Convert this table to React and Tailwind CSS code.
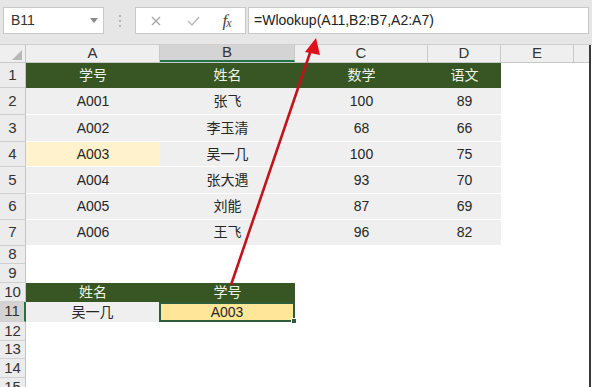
import React from "react";

const cols = [
  { k: "A", w: "w-[134px]" },
  { k: "B", w: "w-[135px]" },
  { k: "C", w: "w-[133px]" },
  { k: "D", w: "w-[73px]" },
  { k: "E", w: "w-[73px]" },
];

const data = [
  ["A001", "张飞", "100", "89"],
  ["A002", "李玉清", "68", "66"],
  ["A003", "吴一几", "100", "75"],
  ["A004", "张大遇", "93", "70"],
  ["A005", "刘能", "87", "69"],
  ["A006", "王飞", "96", "82"],
];
const rowH = ["h-[27px]", "h-[27px]", "h-[25px]", "h-[27px]", "h-[26px]", "h-[26px]"];

function RowHead({ n, active }) {
  return (
    <div
      className={
        "w-[26px] shrink-0 flex items-center justify-center text-[15px] text-[#333] border-b border-[#d0d0d0] " +
        (active ? "bg-[#d3d3d3] border-r-2 border-r-[#217346]" : "bg-[#ececec] border-r border-r-[#c4c4c4]")
      }
    >
      {n}
    </div>
  );
}

export default function App() {
  return (
    <div className="relative w-[592px] h-[387px] overflow-hidden bg-white font-['Liberation_Sans','Noto_Sans_CJK_SC',sans-serif]">
      {/* toolbar */}
      <div className="h-[45px] bg-[#e6e6e6] border-b border-[#cfcfcf] flex items-start pt-[7px] pl-[3px]">
        <div className="w-[101px] h-[27px] bg-white border border-[#c8c8c8] flex items-center justify-between pl-[7px] pr-[5px] text-[14px] text-[#333]">
          <span>B11</span>
          <svg width="8" height="5" viewBox="0 0 8 5"><path d="M0 0 L8 0 L4 5 Z" fill="#8a8a8a" /></svg>
        </div>
        <div className="w-[31px] h-[27px] flex flex-col items-center justify-center gap-[3px]">
          <div className="w-[2px] h-[2px] bg-[#b5b5b5]" />
          <div className="w-[2px] h-[2px] bg-[#b5b5b5]" />
          <div className="w-[2px] h-[2px] bg-[#b5b5b5]" />
        </div>
        <div className="w-[111px] h-[27px] bg-white border border-[#c8c8c8] flex items-center">
          <div className="w-[40px] flex justify-center">
            <svg width="10" height="10" viewBox="0 0 10 10"><path d="M1 1 L9 9 M9 1 L1 9" stroke="#a8a8a8" strokeWidth="1.4" /></svg>
          </div>
          <div className="w-[34px] flex justify-center">
            <svg width="13" height="10" viewBox="0 0 13 10"><path d="M1 5 L5 9 L12 1" stroke="#b8b8b8" strokeWidth="1.4" fill="none" /></svg>
          </div>
          <div className="w-[34px] flex justify-center items-center font-['Liberation_Serif',serif] italic text-[17px] text-[#444]">
            f<span className="text-[12px] -ml-[1px] mt-[5px]">x</span>
          </div>
        </div>
        <div className="ml-[2px] w-[341px] h-[27px] bg-white border border-[#c8c8c8] flex items-center pl-[5px] text-[14px] text-[#222]">
          =Wlookup(A11,B2:B7,A2:A7)
        </div>
      </div>

      {/* sheet */}
      <div className="w-[591px] border-r-2 border-[#3a3a3a]">
        {/* column header */}
        <div className="flex h-[18px] bg-[#efefef] border-b border-[#c8c8c8]">
          <div className="w-[26px] shrink-0 relative border-r border-[#c4c4c4]">
            <svg className="absolute right-[3px] bottom-[2px]" width="10" height="10" viewBox="0 0 10 10"><path d="M10 0 L10 10 L0 10 Z" fill="#b8b8b8" /></svg>
          </div>
          {cols.map((c) => (
            <div
              key={c.k}
              className={
                c.w +
                " shrink-0 flex items-center justify-center text-[15px] text-[#333] border-r border-[#c8c8c8] " +
                (c.k === "B" ? "bg-[#d4d4d4] border-b-2 border-b-[#217346]" : "")
              }
            >
              {c.k}
            </div>
          ))}
          <div className="flex-1" />
        </div>

        {/* row 1 */}
        <div className="flex h-[25px]">
          <RowHead n="1" />
          <div className="flex w-[475px] bg-[#375623] text-[14px] text-[#eef4e8]">
            <div className="w-[134px] flex items-center justify-center">学号</div>
            <div className="w-[135px] flex items-center justify-center">姓名</div>
            <div className="w-[133px] flex items-center justify-center">数学</div>
            <div className="w-[73px] flex items-center justify-center">语文</div>
          </div>
        </div>

        {data.map((r, i) => (
          <div key={i} className={"flex " + rowH[i]}>
            <RowHead n={String(i + 2)} />
            <div className="flex w-[475px] text-[14px] text-[#262626] border-b border-white">
              <div className={"w-[134px] flex items-center justify-center " + (i === 2 ? "bg-[#fff2cc]" : "bg-[#efefef]")}>{r[0]}</div>
              <div className="w-[135px] flex items-center justify-center bg-[#efefef]">{r[1]}</div>
              <div className="w-[133px] flex items-center justify-center bg-[#efefef]">{r[2]}</div>
              <div className="w-[73px] flex items-center justify-center bg-[#efefef]">{r[3]}</div>
            </div>
          </div>
        ))}

        <div className="flex h-[18px]"><RowHead n="8" /></div>
        <div className="flex h-[19px]"><RowHead n="9" /></div>

        {/* row 10 */}
        <div className="flex h-[19px]">
          <RowHead n="10" />
          <div className="flex w-[269px] bg-[#375623] text-[14px] text-[#eef4e8]">
            <div className="w-[134px] flex items-center justify-center">姓名</div>
            <div className="w-[135px] flex items-center justify-center">学号</div>
          </div>
        </div>

        {/* row 11 */}
        <div className="flex h-[20px]">
          <RowHead n="11" active />
          <div className="w-[133px] flex items-center justify-center bg-[#efefef] text-[14px] text-[#262626]">吴一几</div>
          <div className="relative w-[136px] flex items-center justify-center bg-[#ffe699] border-2 border-[#2f5d3c] text-[14px] text-[#262626]">
            A003
            <div className="absolute -right-[4px] -bottom-[4px] w-[6px] h-[6px] bg-[#2f5d3c] border border-white" />
          </div>
        </div>

        <div className="flex h-[19px]"><RowHead n="12" /></div>
        <div className="flex h-[18px]"><RowHead n="13" /></div>
        <div className="flex h-[19px]"><RowHead n="14" /></div>
        <div className="flex h-[19px]"><RowHead n="15" /></div>
      </div>

      {/* arrow */}
      <svg className="absolute inset-0 pointer-events-none" width="592" height="387" viewBox="0 0 592 387">
        <line x1="231" y1="285" x2="311" y2="50" stroke="#c0141c" strokeWidth="2.6" />
        <polygon points="316,38 305,52 320,55" fill="#e0101a" />
      </svg>
    </div>
  );
}
